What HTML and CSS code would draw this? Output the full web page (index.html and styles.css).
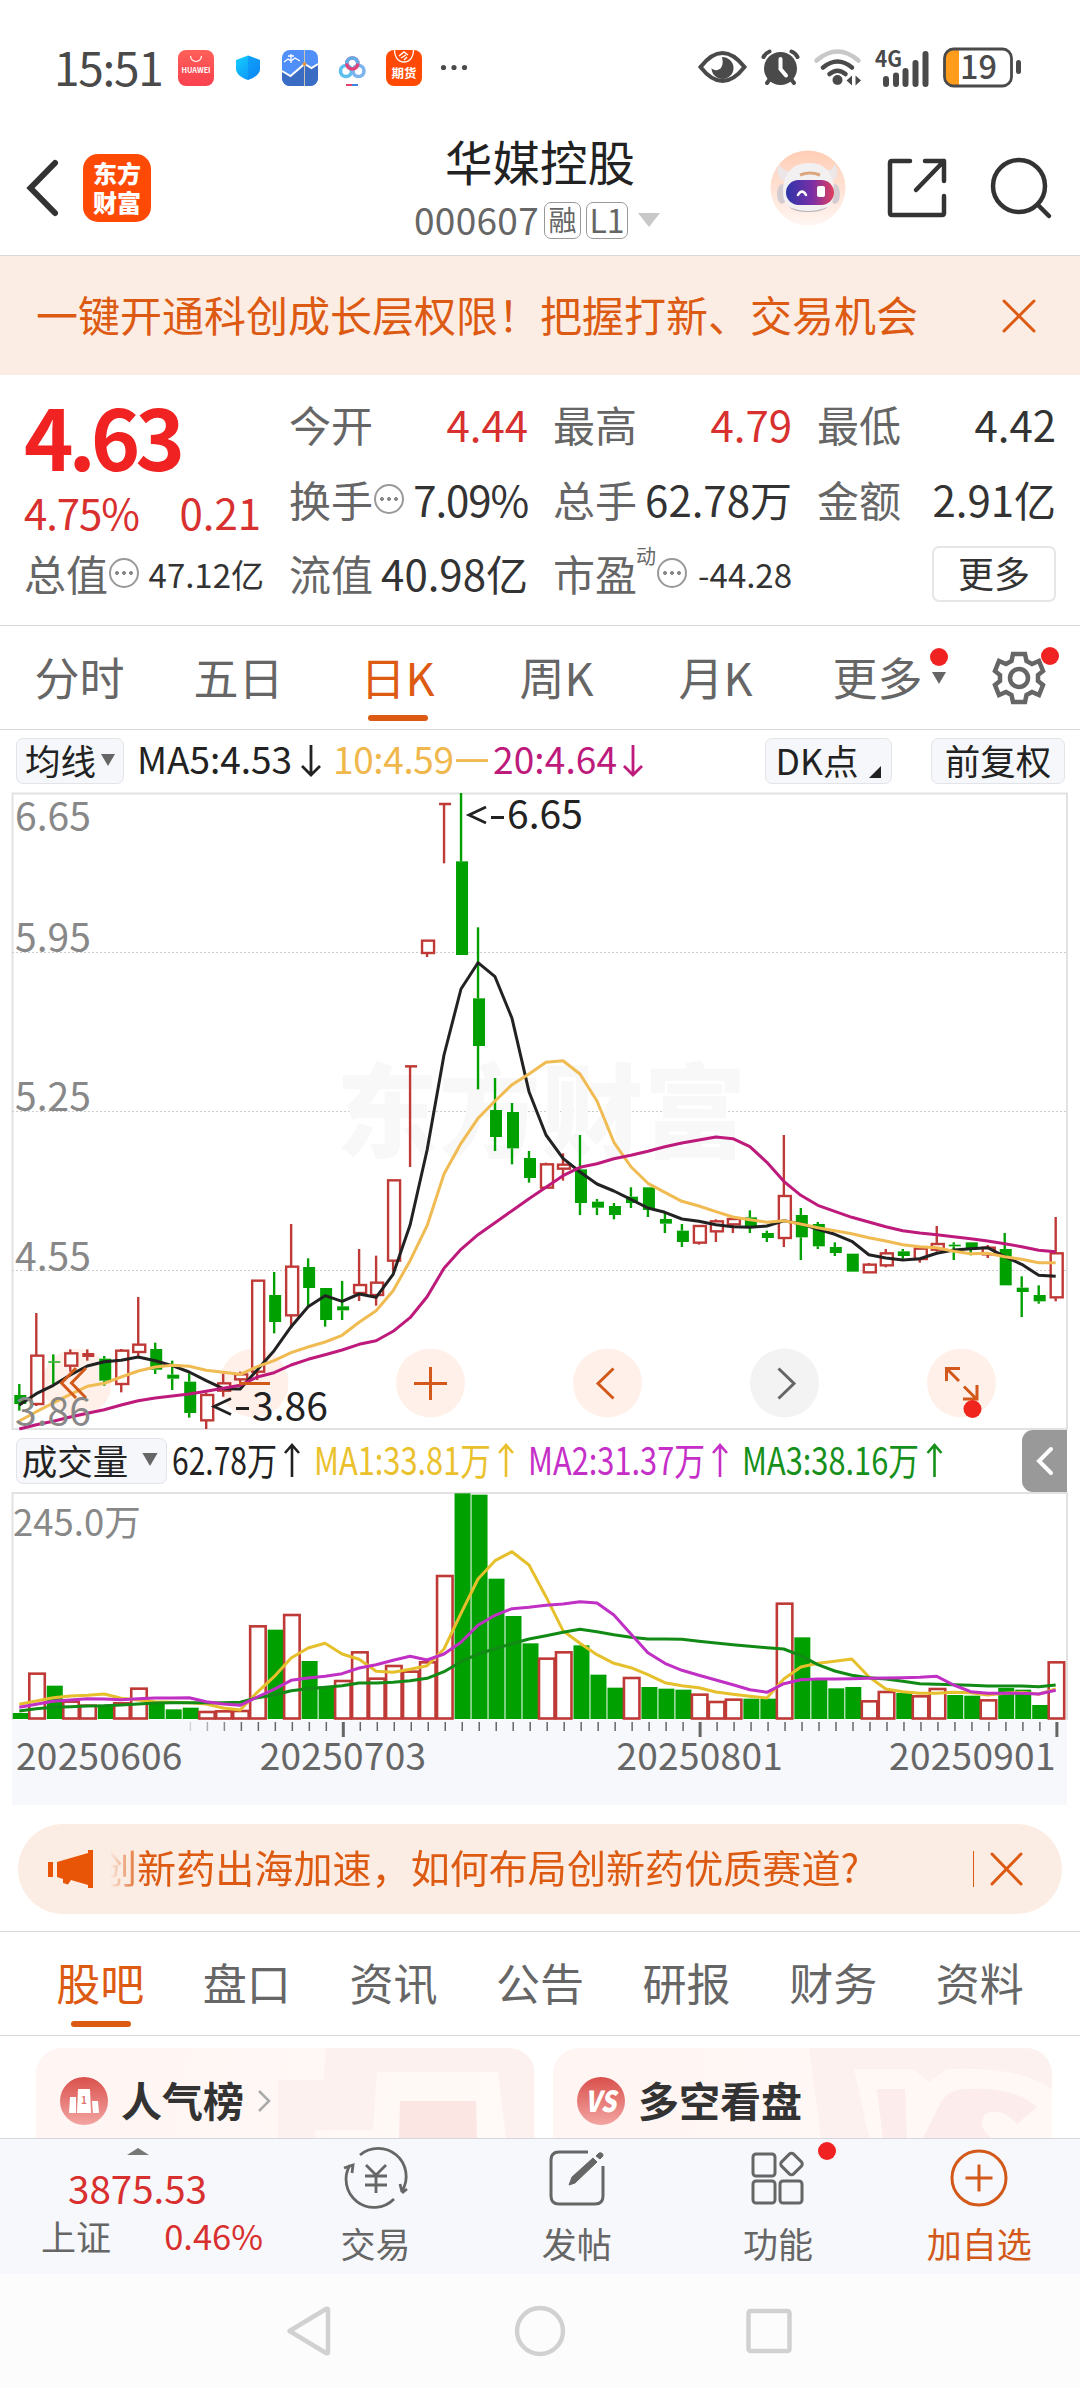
FILE: index.html
```html
<!DOCTYPE html>
<html lang="zh-CN">
<head>
    <meta charset="UTF-8">
    <meta name="viewport" content="width=device-width, initial-scale=1.0">
    <title>华媒控股 000607</title>
    <link rel="stylesheet" href="styles.css">
</head>
<body>

    <div class="status-bar">
        <span class="time">15:51</span>
        <svg class="app-icons" width="300" height="40" viewBox="170 47 300 40">
            <defs>
                <linearGradient id="hw" x1="0" y1="0" x2="0" y2="1"><stop offset="0" stop-color="#ff6059"/><stop offset="1" stop-color="#f9404f"/></linearGradient>
                <linearGradient id="sh" x1="0" y1="0" x2="1" y2="1"><stop offset="0" stop-color="#14d0ff"/><stop offset="1" stop-color="#0b86f6"/></linearGradient>
            </defs>
            <rect x="178" y="50" width="36" height="36" rx="8" fill="url(#hw)"/>
            <path d="M190.500 56a5.500 5.500 0 0 0 11 0" fill="none" stroke="#fff" stroke-width="1.200"/>
            <text x="181.500" y="73" font-size="7.500" font-weight="bold" fill="#fff" textLength="29" lengthAdjust="spacingAndGlyphs">HUAWEI</text>
            <path d="M248 55.500l12 4.500v9c0 5-6 9-12 11-6-2-12-6-12-11v-9z" fill="url(#sh)"/>
            <path d="M248 55.500l12 4.500v9c0 5-6 9-12 11z" fill="#0b86f6" opacity=".5"/>
            <rect x="282" y="50" width="36" height="36" rx="8" fill="#4f8ff7"/>
            <path d="M282 71l8.500 5 14-12 7 4 6.500-4v14a8 8 0 0 1-8 8h-20a8 8 0 0 1-8-8z" fill="#3a6cc4"/>
            <path d="M282 71l8.500 5 14-12 7 4 6.500-4" fill="none" stroke="#fff" stroke-width="2"/>
            <path d="M304.500 50v36" stroke="#c9c3b4" stroke-width="1"/>
            <circle cx="304.500" cy="64" r="2" fill="#e09a4a"/>
            <path d="M284 62l4-3 3 2 4-3 5 3M288 56h6M291 54v9" fill="none" stroke="#fff" stroke-width="1.300"/>
            <circle cx="346" cy="71" r="5.500" fill="none" stroke="#5bc0ee" stroke-width="3.600"/>
            <circle cx="358.500" cy="71" r="5.500" fill="none" stroke="#7db4ee" stroke-width="3.600"/>
            <circle cx="352.300" cy="63.500" r="5.500" fill="none" stroke="#e0447c" stroke-width="3.600"/>
            <path d="M346.800 63.500a5.500 5.500 0 0 1 11 0" fill="none" stroke="#62aee8" stroke-width="3.600"/>
            <path d="M346 85h6" stroke="#e0446c" stroke-width="2"/><path d="M352 85h6" stroke="#3b86e0" stroke-width="2"/>
            <rect x="386" y="50" width="36" height="36" rx="8" fill="#ff4a06"/>
            <path d="M394.500 50c0 7 3.500 12 9.500 12s9.500-5 9.500-12" fill="none" stroke="#fff" stroke-width="1.300"/>
            <path d="M399 56l5-4 4 3M401 58l5-3M404 60l3-3" fill="none" stroke="#fff" stroke-width="1.400"/>
            <text x="391.500" y="78" font-size="12.500" font-weight="bold" fill="#fff">期货</text>
            <circle cx="443.500" cy="67.500" r="2.600" fill="#4a4a4a"/><circle cx="454" cy="67.500" r="2.600" fill="#4a4a4a"/><circle cx="464.500" cy="67.500" r="2.600" fill="#4a4a4a"/>
        </svg>
        <svg class="sys-icons" width="330" height="44" viewBox="694 45 330 44">
            <!-- eye -->
            <path d="M700.500 67c7-9 14-14 22-14s15 5 22 14c-7 9-14 14-22 14s-15-5-22-14z" fill="none" stroke="#4a4a4a" stroke-width="4"/>
            <path d="M722 57a11 11 0 1 1-10.500 11c2 3 8 3 10-1 2-4 1-7 .500-10z" fill="#4a4a4a"/>
            <!-- alarm -->
            <circle cx="780.500" cy="68.500" r="16.500" fill="#4a4a4a"/>
            <path d="M763.500 57q2-4 6-5.500M797.500 57q-2-4-6-5.500M767 83l3-4M794 83l-3-4" stroke="#4a4a4a" stroke-width="4" stroke-linecap="round" fill="none"/>
            <path d="M780.500 59v10l5.500 6.500" stroke="#fff" stroke-width="4" fill="none" stroke-linecap="round"/>
            <!-- wifi -->
            <path d="M816.500 60.500q21-18 42 0" stroke="#c8c8c8" stroke-width="4.500" fill="none" stroke-linecap="round"/>
            <path d="M823 67.500q14.500-12 29 0M829.500 74q8-6.500 16 0" stroke="#4a4a4a" stroke-width="4.500" fill="none" stroke-linecap="round"/>
            <circle cx="837.500" cy="80" r="5" fill="#4a4a4a"/>
            <path d="M846.500 80.500l5.500-5v10zM861 80.500l-5.500-5v10z" fill="#4a4a4a"/>
            <!-- signal -->
            <text x="875" y="66.500" font-size="22" font-weight="bold" fill="#4a4a4a" textLength="27" lengthAdjust="spacingAndGlyphs">4G</text>
            <path d="M886 79v5M896 75.500v8.500M905.500 71v13M915.500 63v21M925.500 54v30" stroke="#4a4a4a" stroke-width="6" stroke-linecap="round"/>
            <!-- battery -->
            <path d="M959 50v35h-5q-9 0-9-9V59q0-9 9-9z" fill="#ff9c1c"/>
            <rect x="944.500" y="49" width="67" height="37" rx="9" fill="none" stroke="#4a4a4a" stroke-width="2.800"/>
            <path d="M1018.500 62.500v9" stroke="#4a4a4a" stroke-width="5" stroke-linecap="round"/>
            <text x="960" y="79" font-size="33" font-weight="500" fill="#4a4a4a" textLength="37" lengthAdjust="spacingAndGlyphs">19</text>
        </svg>
    </div>

    <div class="header">
        <div class="header-left">
            <svg width="34" height="58" viewBox="0 0 34 58"><path d="M29 4L4.500 29 29 54" fill="none" stroke="#333" stroke-width="6" stroke-linecap="round"/></svg>
            <div class="logo">东方<br>财富</div>
        </div>
        <div class="header-title">
            <h1>华媒控股</h1>
            <div class="code">
                <span class="num">000607</span><span class="tag">融</span><span class="tag tag-l1">L1</span>
                <svg width="22" height="14" viewBox="0 0 22 14"><path d="M0 0h22L11 14z" fill="#c8c8c8"/></svg>
            </div>
        </div>
        <div class="header-right">
            <svg width="76" height="76" viewBox="0 0 76 76">
                <defs>
                    <linearGradient id="peach" x1="0" y1="0" x2="0" y2="1"><stop offset="0" stop-color="#ffcdb5"/><stop offset="1" stop-color="#fff6f2"/></linearGradient>
                    <linearGradient id="visor"><stop offset="0" stop-color="#2c35a8"/><stop offset=".55" stop-color="#7b2fa6"/><stop offset="1" stop-color="#e0405c"/></linearGradient>
                </defs>
                <circle cx="38" cy="38" r="37.500" fill="url(#peach)"/>
                <path d="M17 33C9 30 5 23 9 14c3 6 8 8 13 7zM59 33c8-3 11-10 6-19-2 5-6 7-11 7z" fill="#ece6e8"/>
                <ellipse cx="12" cy="44" rx="5" ry="10" fill="#d5ccd2"/><ellipse cx="65" cy="44" rx="5" ry="10" fill="#d5ccd2"/>
                <path d="M13 42c0-18 9-29 26-29s25 11 25 29c0 14-8 20-25 20S13 56 13 42z" fill="#f3f0f2"/>
                <path d="M19 57q19 8 39 0-6 5-20 5t-19-5z" fill="#b9b2ba"/>
                <rect x="16" y="30" width="48" height="25" rx="12.500" fill="url(#visor)"/>
                <path d="M28 45q4-7 8 0" stroke="#fff" stroke-width="2.500" fill="none" stroke-linecap="round"/>
                <rect x="47" y="36" width="8" height="11" rx="2" fill="#fff"/>
                <path d="M30 25q10-4 20 0" stroke="#dba67e" stroke-width="3" fill="none"/>
            </svg>
            <svg width="60" height="60" viewBox="0 0 60 60" fill="none" stroke="#333" stroke-width="4.500" stroke-linecap="round" stroke-linejoin="round"><path d="M23 3H5q-2 0-2 2v50q0 2 2 2h50q2 0 2-2V38M38 3h19v20M57 3L29 32"/></svg>
            <svg width="60" height="62" viewBox="0 0 60 62" fill="none" stroke="#333" stroke-width="4.500" stroke-linecap="round"><circle cx="28" cy="29" r="26"/><path d="M47 48l11 11"/></svg>
        </div>
    </div>

    <div class="promo">
        <span>一键开通科创成长层权限！把握打新、交易机会</span>
        <svg width="34" height="34" viewBox="0 0 34 34"><path d="M2 2l30 30M32 2L2 32" stroke="#dd5a12" stroke-width="3" stroke-linecap="round"/></svg>
    </div>

    <div class="quote">
        <div class="quote-main">
            <div class="price">4.63</div>
            <div class="change"><span class="pct">4.75%</span><span>0.21</span></div>
            <div class="cell"><span class="label">总值</span><i class="more-dot"></i><span class="small">47.12亿</span></div>
        </div>
        <div class="quote-grid">
            <div class="cell"><span class="label">今开</span><span class="red">4.44</span></div>
            <div class="cell"><span class="label">最高</span><span class="red">4.79</span></div>
            <div class="cell"><span class="label">最低</span><span>4.42</span></div>
            <div class="cell"><span class="label">换手</span><i class="more-dot"></i><span class="pct">7.09%</span></div>
            <div class="cell"><span class="label">总手</span><span>62.78万</span></div>
            <div class="cell"><span class="label">金额</span><span>2.91亿</span></div>
            <div class="cell"><span class="label">流值</span><span>40.98亿</span></div>
            <div class="cell cell-pe"><span class="label">市盈</span><sup>动</sup><i class="more-dot"></i><span class="small">-44.28</span></div>
            <div class="cell"><button class="more-btn">更多</button></div>
        </div>
    </div>

    <div class="tabs">
        <span class="tab">分时</span>
        <span class="tab">五日</span>
        <span class="tab active">日K</span>
        <span class="tab">周K</span>
        <span class="tab">月K</span>
        <span class="tab tab-more">更多<svg width="16" height="36" viewBox="0 0 16 36"><circle class="dot" cx="8" cy="0" r="9"/><path d="M1 15h14L8 27z" fill="#666"/></svg></span>
        <span class="tab tab-gear">
            <svg width="54" height="56" viewBox="-27 -28 54 56" fill="none" stroke="#666" stroke-width="4.500">
                <path d="M-6-24H6L7.500-17 13-14 20-17 24-7 19-3V3L24 7 20 17 13 14 7.500 17 6 24H-6L-7.500 17-13 14-20 17-24 7-19 3V-3L-24-7-20-17-13-14-7.500-17z"/>
                <circle r="9"/>
            </svg>
            <i class="red-dot"></i>
        </span>
    </div>

    <div class="ma-row">
        <span class="chip">均线<svg width="14" height="12" viewBox="0 0 14 12"><path d="M0 0h14L7 12z" fill="#666"/></svg></span>
        <svg class="ma-text" width="560" height="62" viewBox="130 730 560 62">
            <text x="137" y="774" textLength="155" fill="#222">MA5:4.53</text>
            <path d="M311 745v30M302 766l9 9 9-9" stroke="#222"/>
            <text x="333" y="774" textLength="121" fill="#f0b84c">10:4.59</text>
            <path d="M456 760.500h32" stroke="#f0b84c"/>
            <text x="493" y="774" textLength="124" fill="#bd1a7c">20:4.64</text>
            <path d="M633 745v30M624 766l9 9 9-9" stroke="#bd1a7c"/>
        </svg>
        <span class="chip chip-dk">DK点<svg width="12" height="12" viewBox="0 0 12 12"><path d="M12 0v12H0z" fill="#222"/></svg></span>
        <span class="chip chip-fq">前复权</span>
    </div>

    <svg class="price-chart" width="1080" height="638" viewBox="0 792 1080 638">
        <path d="M12.500 1429V793.500H1067V1429z" fill="none" stroke="#e2e2e2" stroke-width="2"/>
        <path d="M12 952.500H1067M12 1111.500H1067M12 1270.500H1067" stroke="#ccc" stroke-dasharray="2 2"/>
        <text class="watermark" x="336" y="1150" textLength="410">东方财富</text>
        <g class="circles">
            <circle cx="77" cy="1383" r="34.500"/>
            <circle cx="254" cy="1383" r="34.500"/>
            <circle cx="430.500" cy="1383" r="34.500"/>
            <circle cx="607.500" cy="1383" r="34.500"/>
            <circle class="off" cx="784.500" cy="1383" r="34.500"/>
            <circle cx="961.500" cy="1383" r="34.500"/>
        </g>
        <g id="candles"></g>
        <g id="maLines"></g>
        <g class="circle-icons">
            <path d="M76 1368l-14.500 15L76 1398M86 1368l-14.500 15 14.500 15"/>
            <path d="M239 1383.500h31"/>
            <path d="M414 1383.500h33M430.500 1367v33"/>
            <path d="M613.500 1368.500l-15.500 15 15.500 15"/>
            <path class="off" d="M778.500 1368.500l15.500 15-15.500 15"/>
            <path d="M946.500 1381v-12.500H960M947 1369l12 12M964 1386.500l12 12M963 1399h14v-14"/>
        </g>
        <circle cx="972.500" cy="1409" r="9" fill="#f0261e"/>
        <g class="axis-label">
            <text x="15" y="831">6.65</text>
            <text x="15" y="952">5.95</text>
            <text x="15" y="1111">5.25</text>
            <text x="15" y="1271">4.55</text>
            <text x="15" y="1426">3.86</text>
        </g>
        <g class="mark">
            <path d="M486 807l-17 8 17 8M491 817.500h13M231 1398.500l-17 8 17 8M236 1408.500h13"/>
            <text x="507" y="829">6.65</text>
            <text x="252" y="1421">3.86</text>
        </g>
    </svg>

    <div class="vol-row">
        <span class="chip">成交量<svg width="16" height="13" viewBox="0 0 14 12"><path d="M0 0h14L7 12z" fill="#666"/></svg></span>
        <svg class="vol-text" width="790" height="62" viewBox="168 1430 790 62">
            <g fill="#222" stroke="#222"><text x="172" y="1475" textLength="105" lengthAdjust="spacingAndGlyphs">62.78万</text><path d="M292 1477v-31M285 1453l7-8 7 8"/></g>
            <g fill="#eac12c" stroke="#eac12c"><text x="314" y="1475" textLength="177" lengthAdjust="spacingAndGlyphs">MA1:33.81万</text><path d="M506 1477v-31M499 1453l7-8 7 8"/></g>
            <g fill="#c52fc8" stroke="#c52fc8"><text x="528" y="1475" textLength="177" lengthAdjust="spacingAndGlyphs">MA2:31.37万</text><path d="M720 1477v-31M713 1453l7-8 7 8"/></g>
            <g fill="#16901a" stroke="#16901a"><text x="742" y="1475" textLength="177" lengthAdjust="spacingAndGlyphs">MA3:38.16万</text><path d="M934.500 1477v-31M927.500 1453l7-8 7 8"/></g>
        </svg>
        <span class="fold"><svg width="18" height="28" viewBox="0 0 18 28"><path d="M15 2L3 14l12 12" fill="none" stroke="#fff" stroke-width="4" stroke-linecap="round"/></svg></span>
    </div>

    <svg class="vol-chart" width="1080" height="228" viewBox="0 1492 1080 228">
        <path d="M12.500 1720V1493H1067V1720" fill="none" stroke="#e2e2e2" stroke-width="2"/>
        <text class="vol-max" x="13" y="1536">245.0万</text>
        <g id="bars"></g>
        <g id="volLines"></g>
    </svg>

    <div class="date-axis">
        <svg width="1055" height="18" viewBox="12 1720 1055 18" id="ticks"></svg>
        <div class="dates"><span>20250606</span><span>20250703</span><span>20250801</span><span>20250901</span></div>
    </div>

    <div class="notice">
        <svg width="48" height="38" viewBox="0 0 48 38"><path d="M0 12h5v15H0zM9 12L40 3V0h5v38h-5v-3l-17-5-3 4.500-5-1.500v-4l-6-2z" fill="#e85507"/></svg>
        <span class="notice-text">创新药出海加速，如何布局创新药优质赛道?</span>
        <i class="sep"></i>
        <svg width="34" height="34" viewBox="0 0 34 34"><path d="M2 2l29 30M31 2L2 32" stroke="#dd5a12" stroke-width="3" stroke-linecap="round"/></svg>
    </div>

    <div class="sub-tabs">
        <span class="active">股吧</span><span>盘口</span><span>资讯</span><span>公告</span><span>研报</span><span>财务</span><span>资料</span>
    </div>

    <div class="cards">
        <div class="card">
            <svg class="card-bg" width="498" height="90" viewBox="0 0 498 90">
                <path d="M290 0H498V90H470L462 24H341L337 82H279V90H242V32H288z" fill="#fdf1ef"/>
                <path d="M364 53h76l1 37h-78z" fill="#fbe6e4"/>
            </svg>
            <svg class="badge" width="48" height="48" viewBox="0 0 48 48">
                <defs><linearGradient id="rd" x1="0" y1="0" x2="0" y2="1"><stop offset="0" stop-color="#d9504c"/><stop offset="1" stop-color="#f3a5a2"/></linearGradient></defs>
                <circle cx="24" cy="24" r="24" fill="url(#rd)"/>
                <path d="M10 20h6v16H9zM18 12h12l1 24H17zM32 24h6l1 12h-6z" fill="#fff"/>
                <text x="21" y="27" font-size="10" font-weight="bold" fill="#e07873">1</text>
            </svg>
            <b>人气榜</b>
            <svg width="14" height="24" viewBox="0 0 14 24"><path d="M2 2l10 10L2 22" fill="none" stroke="#aaa" stroke-width="2.500"/></svg>
        </div>
        <div class="card">
            <svg class="card-bg" width="499" height="90" viewBox="0 0 499 90">
                <path d="M256 0H499V90H268z" fill="#fdf1ef"/>
                <path d="M301 21H360L376 34 394 21Q470 18 499 42V90H316z" fill="#fff8f5"/>
                <path d="M324 41H352L354 90H330zM370 90L388 54Q396 41 414 41Q460 38 484 59L464 76Q448 58 432 66Q424 78 438 90z" fill="#fceceb"/>
            </svg>
            <svg class="badge" width="48" height="48" viewBox="0 0 48 48"><circle cx="24" cy="24" r="24" fill="url(#rd)"/><text x="8" y="35" font-size="29" font-weight="900" font-style="italic" fill="#fff" textLength="31" lengthAdjust="spacingAndGlyphs">VS</text></svg>
            <b>多空看盘</b>
        </div>
    </div>

    <div class="bottom-bar">
        <div class="index">
            <svg width="22" height="7" viewBox="0 0 22 7"><path d="M0 7L11 0l11 7z" fill="#777"/></svg>
            <span class="index-val">3875.53</span>
            <div class="index-row"><span>上证</span><span class="red">0.46%</span></div>
        </div>
        <div class="menu">
            <svg width="66" height="60" viewBox="-33 -30 66 60" fill="none" stroke="#666" stroke-width="2.800">
                <path d="M-16-23A28 28 0 0 1 26 13M26 15l5-4M26 14l-2-8M18 21A28 28 0 0 1-26-13M-32-10l9-3-1 8"/>
                <path d="M-10-13L0-3 10-13M0-3v18M-11-2h22M-11 7h22"/>
            </svg>
            <span>交易</span>
        </div>
        <div class="menu">
            <svg width="60" height="60" viewBox="-30 -30 60 60" fill="none" stroke="#666" stroke-width="3">
                <path d="M11-26H-18q-8 0-8 8V18q0 8 8 8H18q8 0 8-8V-12"/>
                <path d="M-8 7l3-8L16-20l4 4L-2 5zM19-22l3-3q4-1 4 3l-3 3z" fill="#666" stroke-width="1"/>
            </svg>
            <span>发帖</span>
        </div>
        <div class="menu">
            <svg width="60" height="60" viewBox="-30 -30 60 60" fill="none" stroke="#666" stroke-width="3">
                <rect x="-25" y="-24" width="22" height="22" rx="3"/><rect x="-25" y="3" width="22" height="22" rx="3"/><rect x="2" y="3" width="22" height="22" rx="3"/>
                <rect x="-8.500" y="-8.500" width="17" height="17" rx="3" transform="translate(13.500 -14) rotate(45)"/>
            </svg>
            <span>功能</span>
            <i class="red-dot"></i>
        </div>
        <div class="menu add">
            <svg width="60" height="60" viewBox="-30 -30 60 60" fill="none" stroke="#d2591a" stroke-width="3"><circle r="27"/><path d="M-13.500 0h27M0-13.500v27"/></svg>
            <span>加自选</span>
        </div>
    </div>

    <div class="sys-nav">
        <svg width="1080" height="60" viewBox="0 2301 1080 60" fill="none" stroke="#d1d1d1" stroke-width="4.500" stroke-linejoin="round">
            <path d="M289.500 2331L326 2309q2-1 2 1v42q0 2-2 1z"/>
            <circle cx="540" cy="2331" r="23"/>
            <rect x="748.500" y="2311" width="41" height="40" rx="2"/>
        </svg>
    </div>

    <script src="chart.js"></script>
</body>
</html>
```
FILE: styles.css
```css
* {
    box-sizing: border-box;
}

body {
    margin: 0;
    width: 1080px;
    height: 2388px;
    overflow: hidden;
    background: #fff;
    color: #333;
    font-family: "Noto Sans CJK SC", "Noto Sans", sans-serif;
}

svg {
    display: block;
    flex: none;
    overflow: visible;
}

span, b {
    white-space: nowrap;
}

.red {
    color: #d8302f;
}

.status-bar {
    height: 108px;
    display: flex;
    align-items: center;
    padding: 26px 56px 0 54px;
}

.time {
    width: 116px;
    font-size: 46px;
    line-height: 1;
    letter-spacing: -1.3px;
    padding-bottom: 3px;
    color: #4a4a4a;
}

.sys-icons {
    margin-left: auto;
}

/* header */
.header {
    height: 148px;
    border-bottom: 1px solid #d5d7da;
    display: grid;
    grid-template-columns: 380px 1fr 380px;
}

.header-left {
    display: flex;
    align-items: center;
    padding: 13px 0 0 26px;
    gap: 23px;
}

.logo {
    width: 68px;
    height: 68px;
    padding-top: 4px;
    border-radius: 15px;
    background: #ff4a06;
    color: #fff;
    font-size: 24px;
    font-weight: 900;
    line-height: 29px;
    text-align: center;
}

.header-title {
    display: flex;
    flex-direction: column;
    align-items: center;
}

.header-title h1 {
    margin: 22px 0 0;
    font-size: 47.5px;
    font-weight: 400;
    line-height: 62px;
    color: #222;
}

.code {
    display: flex;
    align-items: center;
    height: 56px;
    color: #666;
    padding-right: 6px;
}

.num {
    font-size: 37px;
    letter-spacing: .3px;
    line-height: 46px;
    margin-right: 5px;
    padding-bottom: 2px;
}

.tag {
    height: 37px;
    width: 37px;
    border: 1.5px solid #999;
    border-radius: 7px;
    font-size: 28px;
    line-height: 32px;
    text-align: center;
    margin-right: 5px;
}

.tag-l1 {
    width: 42px;
    font-size: 32px;
    margin-right: 10px;
}

.header-right {
    display: flex;
    align-items: center;
    gap: 41px;
    padding: 13px 0 0 70px;
}

.header-right svg:last-child {
    margin-left: 3px;
}

.promo {
    height: 119px;
    background: #fcede4;
    color: #dd5a12;
    font-size: 42px;
    display: flex;
    align-items: center;
    justify-content: space-between;
    padding: 0 44px 0 36px;
}

.promo span {
    padding-bottom: 4px;
}

/* quote */
.quote {
    height: 251px;
    border-bottom: 1px solid #d5d7da;
    padding: 14px 24px 0;
    display: flex;
    gap: 25px;
    font-size: 42px;
}

.quote-main {
    width: 240px;
}

.price {
    height: 100px;
    line-height: 92px;
    font-size: 84px;
    font-weight: 700;
    letter-spacing: -5px;
    color: #f02222;
}

.change {
    height: 49px;
    line-height: 45px;
    display: flex;
    justify-content: space-between;
    padding-right: 3px;
    color: #d8302f;
}

.pct {
    letter-spacing: -1.1px;
}

.quote-grid {
    flex: 1;
    display: grid;
    grid-template-columns: 239px 239px 239px;
    grid-template-rows: repeat(3, 74.5px);
    column-gap: 25px;
}

.cell {
    height: 74.5px;
    display: flex;
    align-items: center;
}

.cell span {
    padding-bottom: 5px;
}

.cell span:last-child {
    margin-left: auto;
}

.label {
    color: #666;
}

.cell .small {
    font-size: 33px;
    padding-bottom: 2px;
}

.more-dot {
    width: 30px;
    height: 30px;
    margin: -4px 0 0 1px;
    border: 2px solid #999;
    border-radius: 50%;
    background: radial-gradient(circle, #888 1.6px, transparent 2.2px) center / 8px 8px no-repeat, radial-gradient(circle, #888 1.6px, transparent 2.2px) 2px center / 8px 8px no-repeat, radial-gradient(circle, #888 1.6px, transparent 2.2px) 16px center / 8px 8px no-repeat;
}

.cell-pe sup {
    font-size: 20px;
    line-height: 1;
    color: #666;
    margin: -38px 0 0 -1px;
}

.more-btn {
    width: 124px;
    height: 56px;
    margin: -2px 0 0 auto;
    padding: 0 0 4px;
    border: 2px solid #e6e6e6;
    border-radius: 7px;
    background: #fff;
    color: #333;
    font: 36px "Noto Sans CJK SC", sans-serif;
    line-height: 46px;
}

/* period tabs */
.tabs {
    height: 104px;
    border-bottom: 1px solid #d5d7da;
    display: flex;
    font-size: 45px;
    color: #666;
}

.tab {
    width: 159px;
    display: flex;
    align-items: center;
    justify-content: center;
    padding-bottom: 3px;
    position: relative;
}

.active {
    color: #dd5a12;
}

.tab.active::after {
    content: "";
    position: absolute;
    left: 50px;
    bottom: 8px;
    width: 60px;
    height: 6px;
    border-radius: 3px;
    background: #dd5a12;
}

.tab-more {
    width: 165px;
    gap: 8px;
    padding-left: 24px;
}

.tab-more svg {
    margin-top: -3px;
}

.tab-more .dot {
    fill: #f02222;
}

.tab-gear {
    width: 118px;
    padding-bottom: 0;
}

.red-dot {
    position: absolute;
    width: 18px;
    height: 18px;
    border-radius: 50%;
    background: #f02222;
}

.tab-gear .red-dot {
    left: 81px;
    top: 21px;
}

/* indicator rows */
.ma-row, .vol-row {
    height: 62px;
    display: flex;
    align-items: center;
    padding-left: 16px;
}

.chip {
    height: 46px;
    width: 108px;
    border: 1.5px solid #e2e4e8;
    border-radius: 7px;
    background: #f6f7fa;
    color: #222;
    font-size: 35.5px;
    line-height: 38px;
    padding-bottom: 3px;
    display: flex;
    align-items: center;
    justify-content: center;
    gap: 5px;
    flex: none;
}

.ma-text {
    margin-left: 6px;
    font-size: 37px;
    fill: none;
    stroke-width: 2.8;
}

.chip-dk {
    width: 127px;
    margin-left: 75px;
    gap: 11px;
}

.chip-dk svg {
    margin-top: 24px;
}

.chip-fq {
    width: 134px;
    margin-left: 39px;
}

.watermark {
    font-size: 102px;
    font-weight: 900;
    fill: #f8f8f8;
}

.circles circle {
    fill: #fff1ea;
}

.circles .off {
    fill: #f3f3f3;
}

.circle-icons path {
    fill: none;
    stroke: #d2591a;
    stroke-width: 3;
}

.circle-icons .off {
    stroke: #666;
}

.axis-label {
    font-size: 39px;
    fill: #888;
}

.mark {
    font-size: 39px;
    fill: #222;
}

.mark path {
    fill: none;
    stroke: #222;
    stroke-width: 2.8;
}

.vol-row .chip {
    width: 151px;
    gap: 14px;
    padding-right: 3px;
}

.vol-text {
    margin-left: 1px;
    font-size: 38px;
}

.vol-text text {
    stroke: none;
}

.vol-text path {
    fill: none;
    stroke-width: 2.6;
}

.fold {
    width: 45px;
    height: 62px;
    margin-left: 64px;
    border-radius: 11px 0 0 11px;
    background: #999;
    display: flex;
    align-items: center;
    justify-content: center;
}

.vol-chart {
    overflow: hidden;
}

.vol-max {
    font-size: 36.5px;
    fill: #888;
}

.date-axis {
    width: 1055px;
    height: 85px;
    margin-left: 12px;
    background: #f7f8fb;
}

.dates {
    display: flex;
    margin-top: -7px;
    padding-left: 4px;
    font-size: 37px;
    letter-spacing: .3px;
    line-height: 46px;
    color: #666;
}

.dates span:nth-child(2) {
    margin-left: 77px;
}

.dates span:nth-child(3) {
    margin-left: 190px;
}

.dates span:nth-child(4) {
    margin-left: 106px;
}

/* notice pill */
.notice {
    height: 90px;
    margin: 19px 18px 17px;
    border-radius: 45px;
    background: #fcede4;
    color: #dd5a12;
    display: flex;
    align-items: center;
    padding: 0 38px 0 30px;
}

.notice-text {
    width: 755px;
    margin-left: 14px;
    padding-bottom: 6px;
    font-size: 39.1px;
    text-indent: -12px;
    overflow: hidden;
    -webkit-mask-image: linear-gradient(to right, transparent 0, #000 32px);
    mask-image: linear-gradient(to right, transparent 0, #000 32px);
}

.sep {
    width: 1.5px;
    height: 36px;
    margin-left: auto;
    margin-right: 16px;
    background: #dd5a12;
}

.sub-tabs {
    height: 105px;
    border-top: 1px solid #d5d7da;
    border-bottom: 1px solid #d5d7da;
    padding: 0 27px;
    display: flex;
    font-size: 44px;
    line-height: 100px;
    color: #666;
}

.sub-tabs span {
    flex: 1;
    text-align: center;
    position: relative;
}

.sub-tabs .active::after {
    content: "";
    position: absolute;
    left: 44px;
    bottom: 8px;
    width: 60px;
    height: 6px;
    border-radius: 3px;
    background: #dd5a12;
}

.cards {
    height: 102px;
    padding: 12px 28px 0 36px;
    display: flex;
    gap: 18px;
}

.card {
    flex: 1;
    height: 90px;
    border-radius: 26px 26px 0 0;
    background: linear-gradient(100deg, #fff5f3, #fffaf7);
    overflow: hidden;
    position: relative;
    display: flex;
    align-items: center;
    gap: 13px;
    padding: 16px 0 0 24px;
}

.card-bg {
    position: absolute;
    top: 0;
    left: 0;
}

.card b {
    position: relative;
    font-size: 41px;
    font-weight: 600;
    line-height: 1;
    color: #333;
    padding-bottom: 4px;
}

.badge {
    position: relative;
}

/* bottom */
.bottom-bar {
    height: 136px;
    border-top: 1px solid #d5d7da;
    background: #f7f8fb;
    display: flex;
}

.index {
    width: 275px;
    display: flex;
    flex-direction: column;
    align-items: center;
    padding-top: 9px;
}

.index-val {
    font-size: 38.5px;
    line-height: 64px;
    color: #d8302f;
}

.index-row {
    width: 100%;
    display: flex;
    justify-content: space-between;
    padding: 0 12px 0 41px;
    font-size: 35px;
    line-height: 33px;
    color: #666;
}

.index-row .red {
    color: #d8302f;
    font-size: 34.5px;
}

.menu {
    flex: 1;
    display: flex;
    flex-direction: column;
    align-items: center;
    padding-top: 9px;
    font-size: 35px;
    line-height: 69px;
    color: #666;
    position: relative;
}

.menu .red-dot {
    left: 140px;
    top: 3px;
}

.menu.add {
    color: #d2591a;
}

.sys-nav {
    height: 114px;
    background: #fcfcfc;
    padding-top: 27px;
}
```
FILE: chart.js
```js
const NS = "http://www.w3.org/2000/svg";
const GREEN = "#00a000";
const RED = "#bf3a36";

// [color, body top, body bottom, high, low], three units per pixel below the top of the chart
const candles = [
    ["g",1806,1833,1773,1853],["r",1688,1833,1560,1839],["g",1705,1709,1684,1773],["r",1681,1718,1669,1736],
    ["f",1680,1692,1669,1703],["g",1697,1763,1689,1778],["r",1673,1773,1668,1798],["r",1655,1677,1512,1689],
    ["g",1668,1730,1649,1743],["g",1745,1757,1703,1791],["g",1766,1860,1741,1874],["r",1806,1882,1799,1908],
    ["r",1771,1793,1741,1811],["r",1744,1759,1736,1771],["r",1463,1736,1463,1761],["g",1506,1587,1437,1621],
    ["r",1421,1567,1293,1606],["g",1422,1485,1396,1541],["g",1485,1581,1485,1601],["g",1540,1552,1464,1581],
    ["r",1476,1500,1368,1524],["r",1469,1506,1388,1538],["r",1162,1403,1162,1436],["t",820,820,820,1122],
    ["r",443,480,443,492],["t",33,33,33,211],["g",205,486,0,486],["g",616,759,403,889],
    ["g",951,1032,855,1074],["g",957,1066,930,1114],["g",1095,1155,1074,1169],["r",1114,1184,1109,1184],
    ["r",1115,1127,1081,1163],["g",1129,1230,1026,1266],["g",1226,1244,1218,1266],["g",1239,1266,1230,1279],
    ["g",1211,1230,1183,1245],["g",1183,1251,1183,1272],["g",1278,1292,1257,1320],["g",1313,1347,1293,1362],
    ["r",1299,1349,1299,1355],["r",1285,1315,1279,1347],["r",1278,1294,1278,1320],["g",1273,1301,1252,1320],
    ["g",1320,1335,1313,1347],["r",1209,1335,1026,1362],["g",1266,1333,1245,1401],["g",1293,1360,1287,1368],
    ["g",1362,1380,1348,1389],["g",1382,1436,1382,1436],["r",1415,1438,1410,1438],["r",1381,1417,1368,1423],
    ["g",1375,1389,1368,1397],["r",1367,1398,1367,1409],["r",1353,1370,1299,1376],["g",1355,1360,1348,1401],
    ["g",1348,1368,1348,1387],["r",1364,1384,1356,1395],["g",1368,1477,1320,1477],["g",1484,1497,1450,1572],
    ["g",1506,1525,1477,1532],["r",1381,1513,1272,1525]
];

const ma = {
    "#222": [1836,1802,1777,1746,1719,1706,1702,1692,1703,1718,1737,1763,1787,1788,1731,1673,1601,1541,1508,1525,1503,1513,1444,1296,1071,786,588,509,551,676,896,1026,1096,1137,1173,1194,1219,1245,1258,1278,1285,1295,1301,1303,1299,1283,1292,1309,1324,1345,1385,1395,1401,1397,1381,1371,1367,1364,1391,1414,1447,1450],
    "#f0bb52": [1884,1856,1830,1804,1780,1771,1752,1734,1722,1717,1720,1732,1738,1744,1721,1703,1679,1662,1647,1627,1588,1553,1493,1403,1298,1143,1051,976,924,875,843,808,803,843,924,1048,1121,1171,1198,1225,1239,1256,1272,1280,1288,1283,1293,1304,1313,1322,1334,1344,1355,1361,1364,1375,1382,1381,1391,1399,1409,1409],
    "#bd1a7c": [1908,1895,1885,1872,1861,1850,1836,1823,1815,1809,1803,1795,1786,1777,1752,1739,1716,1699,1685,1671,1654,1643,1615,1574,1511,1426,1369,1325,1289,1253,1217,1183,1148,1123,1112,1097,1087,1075,1061,1050,1041,1032,1037,1061,1108,1165,1207,1237,1255,1273,1287,1301,1313,1320,1325,1331,1337,1344,1352,1361,1372,1376]
};

// volume series, same units, measured from y = 1430
const volTop = [849,728,767,812,824,824,817,773,820,838,833,843,841,840,586,599,552,693,769,750,664,743,705,722,694,435,190,194,446,558,640,683,664,646,734,773,741,771,776,779,791,813,806,806,806,518,622,750,775,771,811,783,789,796,774,795,797,808,774,779,825,694];
const volColor = "grgrrgrrgggrrrrgrggrrrrrrrgggggrrgggrgggrrrggrggggrrgrrggrgggr";

const volMa = {
    "#e6c02c": [823,813,803,798,796,792,805,810,815,817,818,822,834,840,787,740,684,654,640,672,688,724,727,718,707,657,550,447,392,365,405,500,602,640,674,700,713,734,758,767,773,786,793,799,804,747,711,700,694,687,740,777,785,790,790,787,788,795,790,787,793,777],
    "#128a16": [843,836,832,830,828,827,825,822,819,818,818,818,818,817,803,795,782,776,772,767,759,759,757,752,745,725,695,672,656,641,627,617,607,598,605,614,622,627,627,628,634,639,644,649,653,657,677,704,723,736,743,747,754,761,763,764,766,768,768,768,770,765],
    "#c030c4": [832,823,814,810,806,807,809,806,804,804,803,815,822,826,801,778,751,744,739,731,714,704,691,679,690,672,637,586,556,536,532,526,522,515,519,555,612,668,700,721,736,750,764,779,787,761,749,747,747,746,745,744,743,742,739,765,785,790,790,790,792,781]
};

function xAt(i) {
    return 19.3 + i * 16.99;
}

function add(parent, tag, attrs) {
    const el = document.createElementNS(NS, tag);
    for (const key in attrs) {
        el.setAttribute(key, attrs[key]);
    }
    document.getElementById(parent).appendChild(el);
}

function line(parent, x1, y1, x2, y2, color, width) {
    add(parent, "line", { x1, y1, x2, y2, stroke: color, "stroke-width": width });
}

function polyline(parent, values, top, color) {
    const points = values.map((v, i) => xAt(i).toFixed(1) + "," + (top + v / 3).toFixed(1)).join(" ");
    add(parent, "polyline", { points, fill: "none", stroke: color, "stroke-width": 3, "stroke-linejoin": "round" });
}

candles.forEach(function (c, i) {
    const x = xAt(i);
    const [top, bottom, high, low] = c.slice(1).map(v => 793 + v / 3);
    const color = c[0] === "g" ? GREEN : RED;
    if (high < top) line("candles", x, high, x, top, color, 2.4);
    if (low > bottom) line("candles", x, bottom, x, low, color, 2.4);
    if (c[0] === "t") {
        line("candles", x - 5, top, x + 7, top, color, 2.5);
    } else if (c[0] === "r") {
        add("candles", "rect", { x: x - 5, y: top, width: 12, height: bottom - top, fill: "#fff", stroke: color, "stroke-width": 2.4 });
    } else {
        add("candles", "rect", { x: x - 5, y: top, width: 12, height: bottom - top, fill: color });
    }
});

for (const color in ma) {
    polyline("maLines", ma[color], 793, color);
}

volTop.forEach(function (v, i) {
    const x = xAt(i);
    const y = 1430 + v / 3;
    if (volColor[i] === "r") {
        add("bars", "rect", { x: x - 7, y: y + 1, width: 15.5, height: 1717.5 - y, fill: "#fff", stroke: RED, "stroke-width": 2.6 });
    } else {
        add("bars", "rect", { x: x - 6.5, y, width: 16, height: 1719 - y, fill: GREEN });
    }
});

for (const color in volMa) {
    polyline("volLines", volMa[color], 1430, color);
}

// day ticks fade in on the left, month starts are longer
for (let i = 10; i < 62; i++) {
    const month = i === 19 || i === 40 || i === 61;
    const x = xAt(i) + 1.2;
    add("ticks", "line", {
        x1: x, x2: x, y1: 1722, y2: month ? 1737 : 1731,
        stroke: "#666", "stroke-width": month ? 3 : 1.5, opacity: Math.min(1, (i - 9) / 4)
    });
}
```
